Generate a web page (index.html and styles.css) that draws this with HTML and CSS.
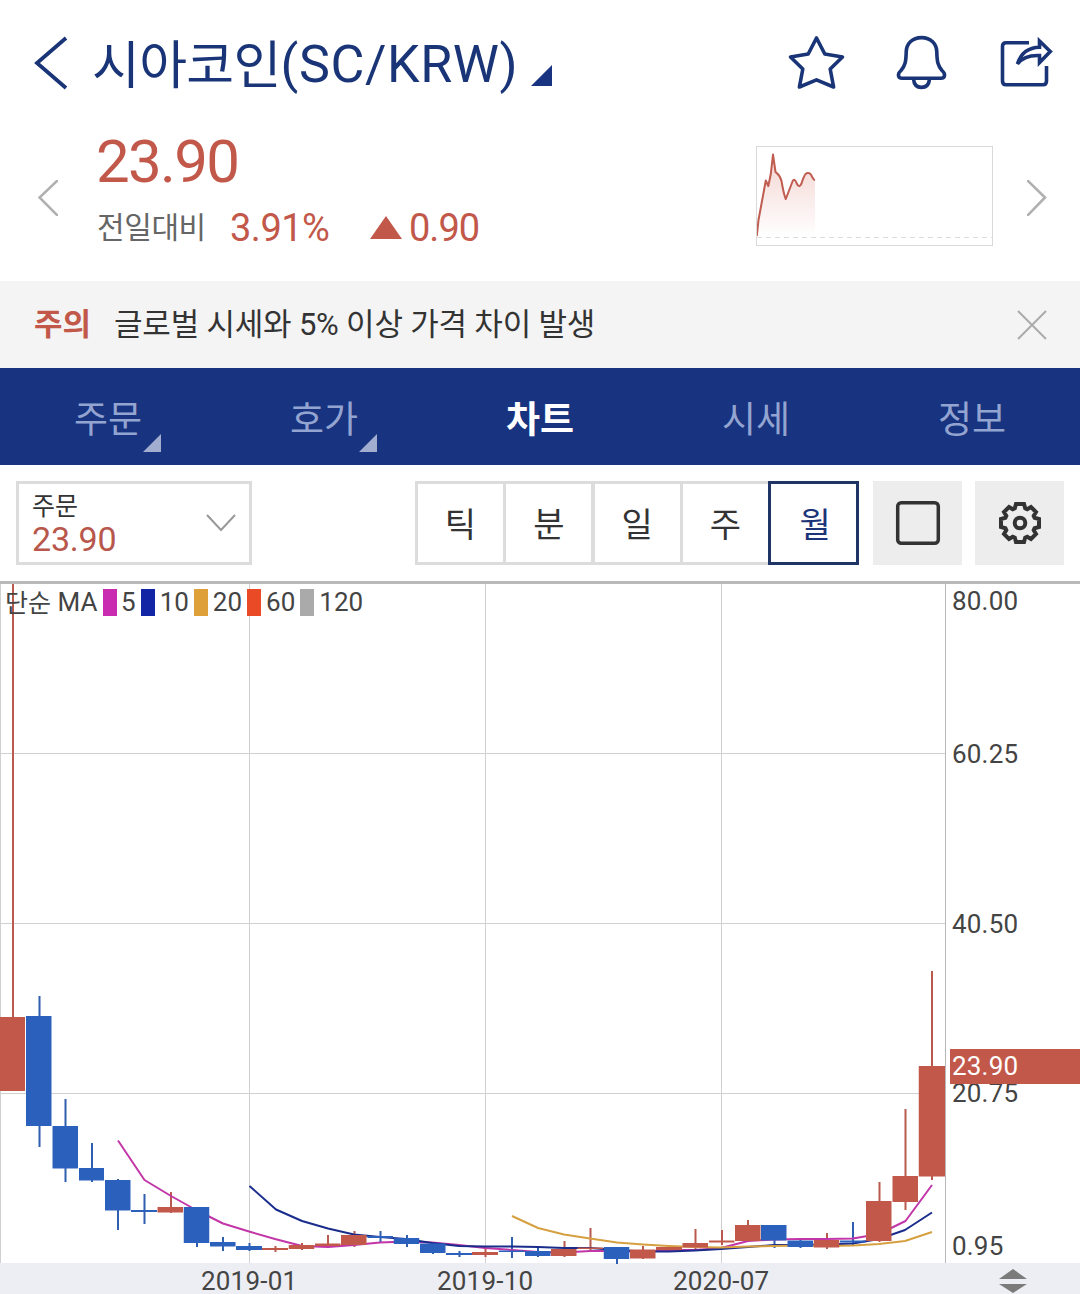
FILE: index.html
```html
<!DOCTYPE html>
<html lang="ko">
<head>
<meta charset="utf-8">
<title>시아코인(SC/KRW)</title>
<link rel="stylesheet" href="styles.css">
</head>
<body>
<header class="header">
  <svg class="back" width="36" height="56" viewBox="0 0 36 56"><path d="M33 3 4 28 33 53"/></svg>
  <h1 class="title"><span class="coin">시아코인</span>(SC/KRW)</h1>
  <svg class="title-mark" width="21" height="21" viewBox="0 0 21 21"><path d="M21 0V21H0Z"/></svg>
  <div class="actions">
    <svg class="icon" width="58" height="58" viewBox="787 34 58 58"><path d="M816.5 38 824.8 54 842.5 57 830.2 69 833.6 87 816.5 79.8 799.4 87 802.8 69 790.5 57 808.2 54Z"/></svg>
    <svg class="icon" width="54" height="58" viewBox="895 34 54 58"><path d="M921.5 37.6C912 37.6 906.4 44 906.2 52 906 62 905 66 901 70.500C897 74 898 78.300 902 78.300H941C945 78.300 946 74 942 70.500C938 66 937 62 936.800 52 936.600 44 931 37.600 921.500 37.600ZM913.500 79C914 84.500 917 87.400 921.500 87.400S929 84.500 929.500 79"/></svg>
    <svg class="icon" width="56" height="58" viewBox="999 34 56 58"><path d="M1029 42.800H1006Q1002.500 42.800 1002.500 46.500V81Q1002.500 84.800 1006 84.800H1043Q1046.500 84.800 1046.500 81V66"/><path class="sharp" d="M1039.500 41 1050.300 51.500 1039.500 62.500V55.500C1029 55 1022 58 1017.500 64 1020.500 54 1028 47.500 1039.500 47.200Z"/></svg>
  </div>
</header>

<section class="quote">
  <svg class="page-arrow" width="20" height="36" viewBox="0 0 20 36"><path d="M20 0 1.500 17.500 20 36"/></svg>
  <div class="figures">
    <div class="price">23.90</div>
    <div class="change">
      <span class="change-label">전일대비</span>
      <span class="rate">3.91%</span>
      <svg class="up" width="32" height="23" viewBox="0 0 32 23"><path d="M16 0 32 23H0Z"/></svg>
      <span class="diff">0.90</span>
    </div>
  </div>
  <svg class="spark" width="237" height="100" viewBox="756 146 237 100">
    <defs><linearGradient id="fade" x1="0" y1="0" x2="0" y2="1"><stop offset="0" stop-color="#f3d5d1"/><stop offset="1" stop-color="#fff"/></linearGradient></defs>
    <path fill="url(#fade)" d="M757 236 758.500 220 766 181 768 186 773 155 775.500 172 779 175 786 199 793 181 796 181 799 187 801 185 805 174 810 173 813 180 815 181V237Z"/>
    <path class="spark-base" d="M757 237.500H992"/>
    <path class="spark-line" d="M756.800 236 758.500 220 765.800 180.500 768.300 186 770.800 174 773 154.500 775.500 172C777.500 174 779.500 174 781.500 181 783 190 784 195 785.800 199L792.500 181.500Q794.500 177.500 796.500 183 799 189 801.500 183.500 804.500 174 806.500 173.300 809.500 172.300 811.200 175 813.500 180 815 180"/>
    <rect class="spark-frame" x="756.500" y="146.500" width="236" height="99"/>
  </svg>
  <svg class="page-arrow" width="20" height="36" viewBox="0 0 20 36"><path d="M0 0 18 17.500 0 36"/></svg>
</section>

<section class="notice">
  <strong class="notice-tag">주의</strong>
  <span class="notice-text">글로벌 시세와 5% 이상 가격 차이 발생</span>
  <svg class="close" width="30" height="30" viewBox="0 0 30 30"><path d="M1 1 29 29M29 1 1 29"/></svg>
</section>

<nav class="tabs">
  <span class="tab has-menu">주문</span>
  <span class="tab has-menu">호가</span>
  <span class="tab active">차트</span>
  <span class="tab">시세</span>
  <span class="tab">정보</span>
</nav>

<div class="toolbar">
  <div class="select">
    <div>
      <div class="select-label">주문</div>
      <div class="select-value">23.90</div>
    </div>
    <svg class="chevron" width="30" height="18" viewBox="0 0 30 18"><path d="M1 1 15 16 29 1"/></svg>
  </div>
  <div class="periods">
    <span class="period">틱</span>
    <span class="period">분</span>
    <span class="period">일</span>
    <span class="period">주</span>
    <span class="period current">월</span>
  </div>
  <div class="tools">
    <div class="tool"><svg width="46" height="46" viewBox="0 0 46 46"><rect x="2.700" y="2.700" width="40.600" height="40.600" rx="3.500"/></svg></div>
    <div class="tool gear"><svg width="46" height="46" viewBox="-23 -23 46 46"><path d="M-4-19H4L5.200-14.600 7.200-13.700 11-16 16-11 13.700-7.200 14.600-5.200 19-4V4L14.600 5.200 13.700 7.200 16 11 11 16 7.200 13.700 5.200 14.600 4 19H-4L-5.200 14.600-7.200 13.700-11 16-16 11-13.700 7.200-14.600 5.200-19 4V-4L-14.600-5.200-13.700-7.200-16-11-11-16-7.200-13.700-5.200-14.600Z"/><circle r="5.300"/></svg></div>
  </div>
</div>

<main class="chart">
  <svg class="plot" width="1080" height="710" viewBox="0 584 1080 710">
    <rect class="axis-strip" x="0" y="1263" width="1080" height="31"/>
    <path class="grid" d="M0 753.500H945M0 923.500H945M0 1093.500H945M249.500 584V1263M485.500 584V1263M721.500 584V1263M.5 584V1263"/>
    <path class="grid edge" d="M945.500 584V1263"/>
    <g class="wick up-c"><path d="M13 584V1091M171 1192V1213M275.500 1246V1252M302 1243V1250M328 1235V1246M354.500 1231V1247M485.500 1246V1257M564.500 1241V1257M590.500 1228V1250M643 1246V1259M669.500 1245V1252M695.500 1229V1251M722 1230V1245M748 1220V1241M827 1233V1249M879.500 1182V1242M905.500 1109V1210M932 971V1180"/></g>
    <g class="wick down-c"><path d="M39.500 996V1147M65.500 1099V1182M92 1143V1182M118 1179V1230M144.500 1194V1224M197 1207V1247M223 1237V1251M249.500 1243V1251M380.500 1231V1242M407 1235V1247M433 1244V1254M459.500 1251V1257M512 1237V1258M538 1248V1257M617 1247V1264M774.500 1225V1248M800.500 1238V1248M853 1222V1245"/></g>
    <path class="ma ma5" d="M118 1140.500 144.500 1180 171 1196 197 1210.500 223 1223.500 249 1231.500 275 1239 302 1246 328 1247 354 1245 380 1242.500 406 1241.500 432 1242.500 459 1245 485 1248 512 1250 538 1252 564 1252.500 590 1251 617 1251 643 1252 669 1250 695 1250 721 1248 748 1241 774 1239.500 800 1239 826 1239 853 1238.500 879 1234 905.500 1221 932 1185"/>
    <path class="ma ma10" d="M249.500 1186 276 1209.500 302 1221 328 1228.500 354 1234.500 380 1237 406 1239 432 1243 459 1246 485 1246.500 512 1246.500 538 1247 564 1248 590 1248 617 1250 643 1251.500 669 1251.500 695 1250.500 721 1249 748 1247 774 1245 800 1245 826 1244.500 853 1243.500 879 1239 905 1230 932 1212.500"/>
    <path class="ma ma20" d="M512 1216 538 1228 564 1234.500 590 1238.500 617 1242.500 643 1244.500 669 1246 695 1247 721 1247.500 748 1246.500 774 1246 800 1245.500 826 1246 853 1245.500 879 1244 905 1241 932 1232"/>
    <g class="up-c">
      <rect x="0" y="1017" width="25" height="74"/><rect x="157.500" y="1207" width="25.500" height="5.500"/><rect x="262" y="1248" width="26" height="2"/><rect x="288.750" y="1245" width="25.500" height="4"/><rect x="315" y="1243.500" width="25.500" height="2.500"/><rect x="341" y="1235" width="25.500" height="10"/><rect x="472" y="1252" width="26" height="3"/><rect x="551" y="1249" width="25.500" height="7"/><rect x="577.500" y="1247.500" width="25.500" height="1.500"/><rect x="630" y="1249.500" width="25.500" height="9"/><rect x="656" y="1247" width="26" height="3"/><rect x="682.500" y="1243" width="25.500" height="4.500"/><rect x="709" y="1240.500" width="25.500" height="2"/><rect x="735" y="1225" width="25.500" height="16"/><rect x="813.750" y="1240" width="25.500" height="7.500"/><rect x="866" y="1201" width="25.500" height="40"/><rect x="892.500" y="1176" width="25.500" height="26"/><rect x="918.750" y="1066" width="26.250" height="110.500"/>
    </g>
    <g class="down-c">
      <rect x="26" y="1016" width="25.500" height="110"/><rect x="52.500" y="1126" width="25.500" height="42.500"/><rect x="79" y="1168" width="25" height="12.500"/><rect x="105" y="1180" width="25.500" height="30.500"/><rect x="131" y="1210" width="26" height="2"/><rect x="183.750" y="1207" width="25.500" height="36"/><rect x="210" y="1242" width="25.500" height="4.500"/><rect x="236" y="1246" width="26" height="4"/><rect x="367.500" y="1236" width="25.500" height="2"/><rect x="393.750" y="1238" width="25.500" height="6"/><rect x="420" y="1243.500" width="25.500" height="9.500"/><rect x="446" y="1253" width="26" height="2"/><rect x="498.750" y="1250.500" width="25.500" height="1.500"/><rect x="525" y="1251" width="25.500" height="5"/><rect x="603.750" y="1247" width="25.500" height="12"/><rect x="761" y="1225" width="25.500" height="15.500"/><rect x="787.500" y="1240.500" width="25.500" height="6.500"/><rect x="840" y="1240.500" width="25.500" height="2"/>
    </g>
    <g class="axis-text">
      <text x="952" y="610">80.00</text><text x="952" y="763">60.25</text><text x="952" y="933">40.50</text><text x="952" y="1102">20.75</text><text x="952" y="1255">0.95</text>
      <text class="date" x="201" y="1290">2019-01</text><text class="date" x="437" y="1290">2019-10</text><text class="date" x="673" y="1290">2020-07</text>
    </g>
    <rect class="up-c" x="950" y="1049" width="130" height="35"/>
    <text class="axis-text now" x="952" y="1075">23.90</text>
    <path class="sorter" d="M1013 1269 1027 1279H999ZM1013 1293 1027 1284H999Z"/>
  </svg>
  <div class="legend">
    <span class="legend-name"><span class="ko">단순</span> MA</span>
    <i class="chip c5"></i><span>5</span>
    <i class="chip c10"></i><span>10</span>
    <i class="chip c20"></i><span>20</span>
    <i class="chip c60"></i><span>60</span>
    <i class="chip c120"></i><span>120</span>
  </div>
</main>
</body>
</html>
```
FILE: styles.css
```css
* { box-sizing: border-box; }

body {
  margin: 0;
  width: 1080px;
  height: 1294px;
  overflow: hidden;
  background: #fff;
  font-family: Roboto, "Noto Sans CJK KR", sans-serif;
  color: #333;
}

svg { display: block; flex: none; fill: none; }

/* title bar */
.header {
  display: flex;
  align-items: center;
  height: 130px;
  padding: 0 25px 0 32px;
}
.back { margin: -5px 24px 0 1px; stroke: #1a3577; stroke-width: 3.8; }
.title {
  width: 425px;
  margin: 0;
  font-size: 52px;
  font-weight: 400;
  line-height: 60px;
  letter-spacing: 0.6px;
  color: #1a3577;
  white-space: nowrap;
}
.coin { letter-spacing: -0.7px; margin-left: -1px; line-height: 1; vertical-align: -2px; }
.title-mark { margin: 20px 0 0 13px; fill: #18337f; }
.actions { display: flex; gap: 50px; margin: -4px 0 0 auto; }
.icon { stroke: #1a3577; stroke-width: 3.6; stroke-linejoin: round; }
.icon .sharp { stroke-linejoin: miter; }

/* quote */
.quote { display: flex; align-items: flex-start; height: 151px; padding: 0 33px 0 38px; }
.page-arrow { margin-top: 50px; stroke: #b0b0b0; stroke-width: 2.6; }
.figures { flex: 1; margin-left: 38px; }
.price { font-size: 60px; line-height: 63px; letter-spacing: -1.7px; color: #c2584a; }
.change { display: flex; align-items: center; height: 40px; margin-top: 14px; line-height: 40px; color: #c2584a; }
.change-label { width: 134px; padding: 2px 0 0 1px; font-size: 30px; letter-spacing: -0.4px; color: #666; }
.rate { width: 140px; padding-top: 1px; font-size: 38px; letter-spacing: -0.5px; }
.up { margin-top: 1px; fill: #c2584a; }
.diff { margin-left: 7px; padding-top: 1px; font-size: 38px; letter-spacing: -1px; }
.spark { margin: 16px 34px 0 0; }
.spark-line { stroke: #c05c50; stroke-width: 2; stroke-linejoin: round; }
.spark-base { stroke: #dcdcdc; stroke-dasharray: 5 4; }
.spark-frame { stroke: #d9d9d9; }

/* notice */
.notice {
  display: flex;
  align-items: center;
  height: 87px;
  padding: 0 33px 0 34px;
  background: #f4f4f4;
  font-size: 31px;
  line-height: 40px;
}
.notice-tag { width: 80px; color: #c2584a; }
.notice-text { white-space: nowrap; letter-spacing: -0.2px; }
.close { margin-left: auto; stroke: #aaa; stroke-width: 2; }

/* tabs */
.tabs {
  display: grid;
  grid-template: 97px / repeat(5, 216px);
  overflow: hidden;
  background: #18337f;
}
.tab { position: relative; text-align: center; font-size: 37px; line-height: 105px; color: #93a4d0; }
.tab.active { font-weight: 700; color: #fff; }
.has-menu::after {
  content: "";
  position: absolute;
  right: 55px;
  bottom: 13px;
  border-left: 18px solid transparent;
  border-bottom: 18px solid #a1aecf;
}

/* toolbar */
.toolbar { display: flex; height: 119px; padding: 16px 16px 0; border-bottom: 3px solid #b9b9b9; }
.select {
  display: flex;
  align-items: center;
  justify-content: space-between;
  width: 236px;
  height: 84px;
  padding: 0 13px;
  border: 3px solid #dcdcdc;
}
.select-label { margin-top: 3px; font-size: 25px; line-height: 28px; }
.select-value { font-size: 34px; line-height: 36px; letter-spacing: -0.2px; color: #b8574b; }
.chevron { stroke: #999; stroke-width: 2; }
.periods { display: flex; height: 84px; margin-left: 163px; }
.period {
  width: 91px;
  margin-right: -2.7px;
  border: 3px solid #dcdcdc;
  text-align: center;
  font-size: 34px;
  line-height: 82px;
}
.period.current { position: relative; margin-right: 0; padding-left: 3px; border-color: #1f3566; color: #1c3478; }
.tools { display: flex; gap: 13px; margin-left: auto; }
.tool { display: grid; place-items: center; width: 89px; height: 84px; background: #ededed; }
.tool svg { stroke: #333; stroke-width: 3.5; stroke-linejoin: round; }
.tool.gear svg { stroke-width: 4; stroke-linejoin: miter; }

/* chart */
.chart { position: relative; height: 710px; }
.grid { stroke: #d0d0d0; }
.grid.edge { stroke: #b8b8b8; }
.axis-strip { fill: #edeef3; }
.up-c { fill: #c2584a; }
.down-c { fill: #2c60bd; }
.wick { stroke-width: 2; }
.wick.up-c { stroke: #b85a4d; }
.wick.down-c { stroke: #2f5fae; }
.ma { stroke-width: 2; stroke-linejoin: round; }
.ma5 { stroke: #c236a8; }
.ma10 { stroke: #1a2c8c; }
.ma20 { stroke: #d6a040; }
.axis-text { font-size: 26px; letter-spacing: 0.2px; fill: #444; }
.axis-text.now { fill: #fff; }
.sorter { fill: #7b7b7b; }
.legend {
  position: absolute;
  top: 3px;
  left: 5px;
  display: flex;
  align-items: center;
  font-size: 26px;
  line-height: 30px;
  color: #444;
}
.legend-name { width: 97px; white-space: nowrap; }
.ko { font-size: 25px; line-height: 1; vertical-align: -1px; }
.chip { width: 14px; height: 27px; margin: 1px 5px 0 5px; }
.legend-name + .chip { margin: 1px 4px 0 1px; }
.c5 { background: #c92cb0; }
.c10 { background: #1226a5; }
.c20 { background: #dea038; }
.c60 { background: #eb4a27; }
.c120 { background: #aaa; }
```
